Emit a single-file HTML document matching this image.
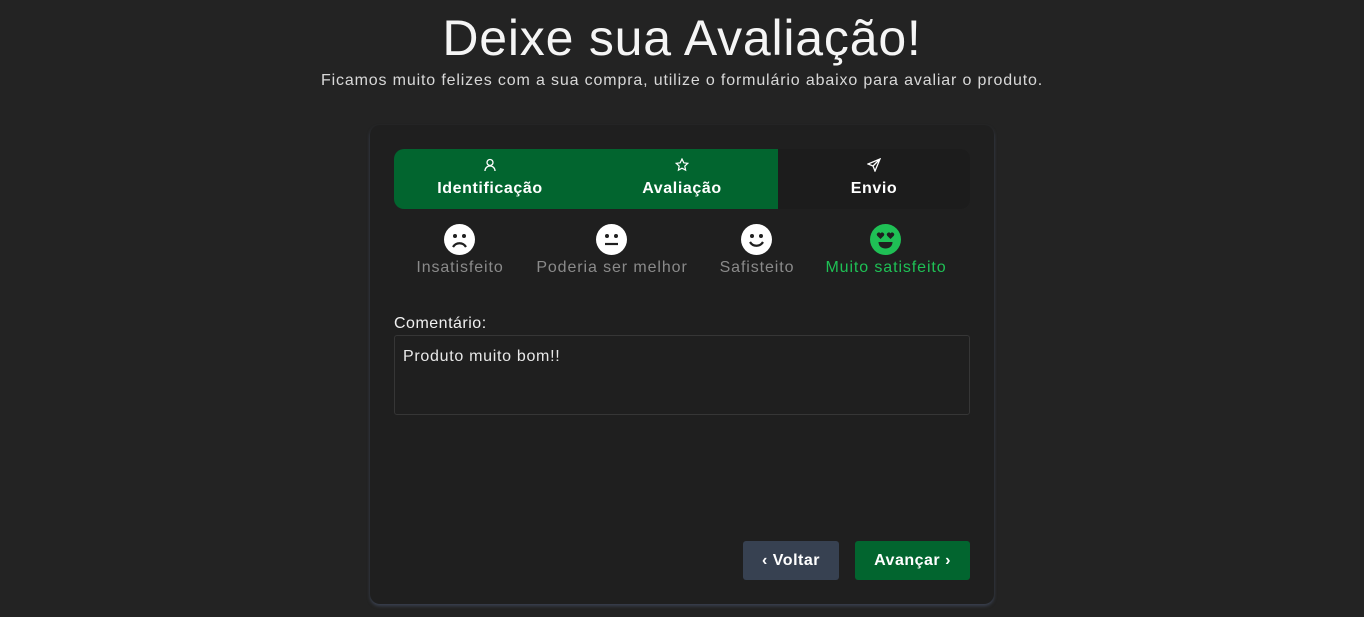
<!DOCTYPE html>
<html><head><meta charset="utf-8"><style>
body{margin:0;width:1364px;height:617px;background:#232323;font-family:"Liberation Sans",sans-serif;color:#fff;position:relative;overflow:hidden}
.a{position:absolute}
h1{position:absolute;top:9px;left:0;width:1364px;text-align:center;margin:0;font-weight:400;font-size:50px;letter-spacing:0.8px;color:#f5f5f5}
.sub{top:72px;left:0;width:1364px;text-align:center;font-size:16px;letter-spacing:0.85px;color:#d8d8d8}
.card{left:370px;top:125px;width:624px;height:479px;background:#1f1f1f;border-radius:10px;box-shadow:0 2px 3px #3a4150}
.tabs{left:394px;top:149px;width:576px;height:60px;background:#1c1c1c;border-radius:10px;overflow:hidden}
.g{left:0;top:0;width:384px;height:60px;background:#02652f}
.tl{font-weight:bold;font-size:16px;letter-spacing:0.6px;text-align:center;top:31px}
.ic{top:9px}
.lb{top:259px;font-size:16px;letter-spacing:0.9px;color:#8a8a8a;text-align:center;white-space:nowrap}
.btn{top:541px;height:39px;border-radius:3px;font-weight:bold;font-size:16px;letter-spacing:0.5px;line-height:40px;text-align:center}
</style></head><body>
<h1>Deixe sua Avaliação!</h1>
<div class="a sub">Ficamos muito felizes com a sua compra, utilize o formulário abaixo para avaliar o produto.</div>
<div class="a card"></div>
<div class="a tabs">
 <div class="a g"></div>
 <svg class="a ic" style="left:89px" width="14" height="14" viewBox="0 0 14 14" fill="none" stroke="#fff" stroke-width="1.3"><circle cx="7" cy="4.5" r="3"/><path d="M2 13c0-3 2.2-5 5-5s5 2 5 5"/></svg>
 <svg class="a ic" style="left:281px" width="14" height="14" viewBox="0 0 14 14" fill="none" stroke="#fff" stroke-width="1.2"><path d="M7 1l1.8 3.8 4 .5-3 2.8.8 4L7 10.2 3.4 12.1l.8-4-3-2.8 4-.5z"/></svg>
 <svg class="a ic" style="left:473px" width="14" height="14" viewBox="0 0 14 14" fill="none" stroke="#fff" stroke-width="1.3"><path d="M13 1L1 6l5 2 2 5z M13 1L6 8"/></svg>
 <div class="a tl" style="left:0;width:192px">Identificação</div>
 <div class="a tl" style="left:192px;width:192px">Avaliação</div>
 <div class="a tl" style="left:384px;width:192px">Envio</div>
</div>
<svg class="a" style="left:444px;top:224px" width="31" height="31" viewBox="0 0 31 31"><circle cx="15.5" cy="15.5" r="15.5" fill="#fff"/><circle cx="11" cy="12" r="2" fill="#1f1f1f"/><circle cx="20" cy="12" r="2" fill="#1f1f1f"/><path d="M9 23c3-5 10-5 13 0" stroke="#1f1f1f" stroke-width="2.2" fill="none"/></svg>
<svg class="a" style="left:596px;top:224px" width="31" height="31" viewBox="0 0 31 31"><circle cx="15.5" cy="15.5" r="15.5" fill="#fff"/><circle cx="11" cy="12" r="2" fill="#1f1f1f"/><circle cx="20" cy="12" r="2" fill="#1f1f1f"/><path d="M9 20h13" stroke="#1f1f1f" stroke-width="2.2"/></svg>
<svg class="a" style="left:741px;top:224px" width="31" height="31" viewBox="0 0 31 31"><circle cx="15.5" cy="15.5" r="15.5" fill="#fff"/><circle cx="11" cy="12" r="2" fill="#1f1f1f"/><circle cx="20" cy="12" r="2" fill="#1f1f1f"/><path d="M9 18c3 5 10 5 13 0" stroke="#1f1f1f" stroke-width="2.2" fill="none"/></svg>
<svg class="a" style="left:870px;top:224px" width="31" height="31" viewBox="0 0 31 31"><circle cx="15.5" cy="15.5" r="15.5" fill="#1fc055"/><path d="M10.5 15l-3.3-3.3a2 2 0 013.3-2.3 2 2 0 013.3 2.3z M20.5 15l-3.3-3.3a2 2 0 013.3-2.3 2 2 0 013.3 2.3z" fill="#1f1f1f"/><path d="M8.5 18h14c0 4-3 6.5-7 6.5s-7-2.5-7-6.5z" fill="#1f1f1f"/></svg>
<div class="a lb" style="left:400px;width:120px">Insatisfeito</div>
<div class="a lb" style="left:532px;width:160px">Poderia ser melhor</div>
<div class="a lb" style="left:700px;width:114px">Safisteito</div>
<div class="a lb" style="left:816px;width:140px;color:#1fc055">Muito satisfeito</div>
<div class="a" style="left:394px;top:315px;font-size:16px;letter-spacing:0.5px;color:#f0f0f0">Comentário:</div>
<div class="a" style="left:394px;top:335px;width:574px;height:78px;border:1px solid #363636;border-radius:3px"></div>
<div class="a" style="left:403px;top:348px;font-size:16px;letter-spacing:0.7px;color:#e8e8e8">Produto muito bom!!</div>
<div class="a btn" style="left:743px;width:96px;background:#374151">‹ Voltar</div>
<div class="a btn" style="left:855px;width:115px;background:#02652f">Avançar ›</div>
</body></html>
